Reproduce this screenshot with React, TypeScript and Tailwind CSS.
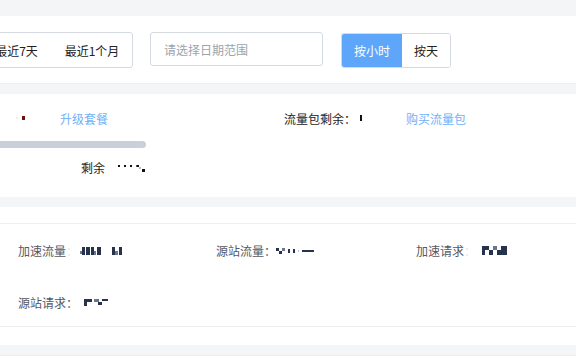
import React from 'react';

type Rect = [number, number, number, number, string];

// pixelated placeholder values (masked numbers in the original)
function Pix({ w, h, rects }: { w: number; h: number; rects: Rect[] }) {
  return (
    <svg width={w} height={h} viewBox={`0 0 ${w} ${h}`} className="block shrink-0">
      {rects.map(([x, y, rw, rh, c], i) => (
        <rect key={i} x={x} y={y} width={rw} height={rh} fill={c} />
      ))}
    </svg>
  );
}

const N = '#27324d';
const N2 = '#6b7590';
const N3 = '#b9bfcc';

function Stat({ label, faint, value }: { label: string; faint?: boolean; value: React.ReactNode }) {
  return (
    <div className="flex items-center h-[17px] text-[#55585e]">
      <span>{label}</span>
      <span className={faint ? 'text-[#e4e6ea]' : 'text-[#55585e]'}>：</span>
      {value}
    </div>
  );
}

export default function App() {
  return (
    <div className="w-[576px] h-[356px] overflow-hidden bg-[#f4f5f7] pt-4 text-xs leading-[17px] text-[#222] font-['Noto_Sans_CJK_SC','Noto_Sans',sans-serif]">
      {/* toolbar */}
      <div className="bg-white border-b border-[#ebeef5] h-[68px] flex items-start pt-4">
        <div className="-ml-[20px] flex h-9 border border-[#d5d9e2] rounded-[3px] bg-white">
          <div className="w-[71px] flex items-center justify-center">最近7天</div>
          <div className="w-[80px] flex items-center justify-center">最近1个月</div>
        </div>
        <div className="ml-[17px] w-[173px] h-[34px] border border-[#d5d9e2] rounded-[3px] flex items-center pl-[13px] text-[#9ea3ab]">
          请选择日期范围
        </div>
        <div className="ml-[18px] mt-px flex h-[35px] border border-[#d5d9e2] rounded-[3px] overflow-hidden">
          <div className="w-[60px] bg-[#5ea6f9] text-white flex items-center justify-center">按小时</div>
          <div className="w-[48px] bg-white flex items-center justify-center">按天</div>
        </div>
      </div>

      {/* package */}
      <div className="mt-[10px] bg-white h-[103px] pt-[15px]">
        <div className="flex items-center h-[18px]">
          <div className="w-[284px] flex items-center">
            <span className="ml-[16px] w-[2px] h-[2px] bg-[#f6efd2]" />
            <span className="ml-[4px] w-[3px] h-[4px] bg-[#6e1212]" />
            <span className="ml-[35px] text-[#6fb1f7]">升级套餐</span>
          </div>
          <span>流量包剩余：</span>
          <span className="ml-[3px]">
            <Pix w={4} h={7} rects={[[1, 0, 2, 6, '#111']]} />
          </span>
          <span className="ml-[43px] text-[#6fb1f7]">购买流量包</span>
        </div>
        <div className="mt-[14px] -ml-[60px] w-[206px] h-[7px] rounded-full bg-[#c9d0db]" />
        <div className="mt-[11px] pl-[81px] flex items-center h-[17px]">
          <span>剩余</span>
          <Pix
            w={32}
            h={12}
            rects={[
              [13, 3, 2, 2, '#111'],
              [19, 3, 2, 2, '#111'],
              [25, 3, 2, 2, '#111'],
              [31, 3, 1, 2, '#555'],
            ]}
          />
          <Pix
            w={10}
            h={12}
            rects={[
              [0, 3, 2, 2, '#111'],
              [2, 5, 2, 2, '#bbb'],
              [5, 7, 3, 3, '#111'],
            ]}
          />
        </div>
      </div>

      {/* stats */}
      <div className="mt-[10px] bg-white h-[138px]">
        <div className="h-[17px] border-b border-[#eceef2]" />
        <div className="h-[103px] border-b border-[#eceef2] pt-[18px] pl-[18px]">
          <div className="grid grid-cols-[198px_200px_1fr]">
            <Stat
              label="加速流量"
              faint
              value={
                <span className="ml-[2px]">
                  <Pix
                    w={44}
                    h={10}
                    rects={[
                      [2, 1, 3, 8, N],
                      [0, 5, 2, 3, N2],
                      [6, 1, 4, 8, N],
                      [11, 1, 3, 8, N],
                      [14, 5, 2, 4, N2],
                      [17, 1, 4, 8, N],
                      [32, 1, 3, 8, N],
                      [35, 5, 3, 4, N2],
                      [39, 1, 3, 8, N],
                    ]}
                  />
                </span>
              }
            />
            <Stat
              label="源站流量"
              value={
                <Pix
                  w={40}
                  h={10}
                  rects={[
                    [0, 2, 3, 3, N],
                    [3, 5, 3, 3, N],
                    [6, 2, 3, 3, N2],
                    [12, 3, 2, 4, N],
                    [17, 3, 2, 4, N],
                    [22, 4, 1, 2, N3],
                    [26, 4, 12, 2, N],
                  ]}
                />
              }
            />
            <Stat
              label="加速请求"
              faint
              value={
                <span className="ml-[6px]">
                  <Pix
                    w={26}
                    h={11}
                    rects={[
                      [0, 1, 3, 9, N],
                      [3, 1, 4, 4, N],
                      [7, 5, 4, 5, N],
                      [11, 1, 4, 4, N2],
                      [15, 5, 4, 5, N],
                      [19, 1, 3, 9, N],
                      [22, 1, 3, 9, N],
                    ]}
                  />
                </span>
              }
            />
          </div>
          <div className="mt-[35px]">
            <Stat
              label="源站请求"
              value={
                <span className="ml-[6px]">
                  <Pix
                    w={26}
                    h={9}
                    rects={[
                      [0, 1, 3, 7, N],
                      [3, 1, 5, 3, N],
                      [10, 1, 5, 3, N2],
                      [14, 4, 4, 3, N],
                      [18, 1, 6, 2, N],
                    ]}
                  />
                </span>
              }
            />
          </div>
        </div>
      </div>

      {/* next card */}
      <div className="mt-[10px] bg-white h-[40px] border-t border-[#eceef2]" />
    </div>
  );
}
